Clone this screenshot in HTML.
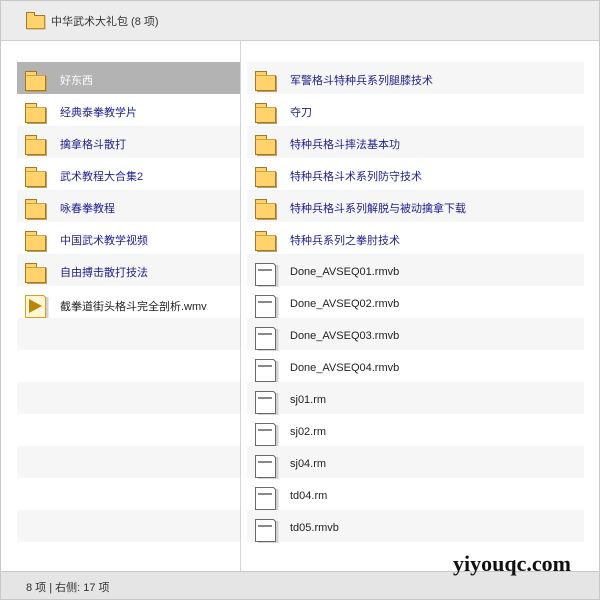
<!DOCTYPE html>
<html><head><meta charset="utf-8"><style>
*{margin:0;padding:0;box-sizing:border-box}
body{width:600px;height:600px;overflow:hidden;background:#fff;font-family:"Liberation Sans","Noto Sans CJK SC",sans-serif;font-size:11px;position:relative}
.frame{position:absolute;left:0;top:0;width:600px;height:600px;border:1px solid #c8c8c8}
.hdr{position:absolute;left:0;top:0;width:600px;height:41px;background:#ececec;border:1px solid #c8c8c8;border-bottom:1px solid #cfcfcf}
.hdr .t{position:absolute;left:50px;top:12px;color:#333;font-size:11px}
.div{position:absolute;left:240px;top:41px;width:1px;height:530px;background:#d4d4d4}
.ftr{position:absolute;left:0;top:571px;width:600px;height:29px;background:#e5e5e5;border:1px solid #c8c8c8}
.ftr span{position:absolute;left:25px;top:7px;color:#333;font-size:11px}
.row{position:absolute;height:32px}
.row.g{background:#f6f6f6}
.row.sel{background:#b3b3b3}
.row .n{position:absolute;top:10px;font-size:11px;white-space:nowrap}
.row .n.k{top:12px}
.L{left:17px;width:223px}
.R{left:247px;width:337px}
.L .n{left:43px}
.R .n{left:43px}
.f{color:#1f1f8f}
.k{color:#222}
.sel .n{color:#fff}
.ic{position:absolute;left:7px;top:8px}
.wm{position:absolute;left:453px;top:551px;font-family:"Liberation Serif",serif;font-weight:bold;font-size:22px;color:#111}
</style></head><body>
<div class="frame"></div>
<div class="hdr"><svg style="position:absolute;left:25px;top:11px" width="20" height="18"><path d="M0.5 0.5h8v3h10v13h-18z" fill="#ffd36b" stroke="#9c7a2a"/><path d="M19 4v13H1" fill="none" stroke="#c9a24a"/></svg><span class="t">中华武术大礼包 (8 项)</span></div>
<div class="div"></div>
<div id="c"></div>
<div class="ftr"><span>8 项 | 右侧: 17 项</span></div>
<div class="wm">yiyouqc.com</div>
<script>
var folder='<svg class="ic" width="24" height="22"><path d="M22 6v16H3" fill="none" stroke="#c2a060" stroke-width="2"/><path d="M1.5 1.5h11v4h9v15h-20z" fill="#ffd36b" stroke="#9c7a2a"/><path d="M1.5 5.5h20" stroke="#c9a24a"/></svg>';
var file='<svg class="ic" width="25" height="25"><path d="M23 3v21H4" fill="none" stroke="#d2d2d2" stroke-width="3"/><path d="M1.5 1.5h18l2 2v20h-20z" fill="#fff" stroke="#6a6a6a"/><path d="M4 8h14" stroke="#888" stroke-width="2"/></svg>';
var vid='<svg class="ic" width="25" height="25"><path d="M23 3v21H4" fill="none" stroke="#d2d2d2" stroke-width="3"/><path d="M1.5 1.5h18l2 2v20h-20z" fill="#fff6d8" stroke="#d4a020"/><path d="M5 5l13 7-13 7z" fill="#b8860b"/></svg>';
var L=[["好东西",1],["经典泰拳教学片",1],["擒拿格斗散打",1],["武术教程大合集2",1],["咏春拳教程",1],["中国武术教学视频",1],["自由搏击散打技法",1],["截拳道街头格斗完全剖析.wmv",2]];
var R=[["军警格斗特种兵系列腿膝技术",1],["夺刀",1],["特种兵格斗摔法基本功",1],["特种兵格斗术系列防守技术",1],["特种兵格斗系列解脱与被动擒拿下载",1],["特种兵系列之拳肘技术",1],["Done_AVSEQ01.rmvb",0],["Done_AVSEQ02.rmvb",0],["Done_AVSEQ03.rmvb",0],["Done_AVSEQ04.rmvb",0],["sj01.rm",0],["sj02.rm",0],["sj04.rm",0],["td04.rm",0],["td05.rmvb",0]];
var h='';
for(var i=0;i<15;i++){
 var cl='row L'+(i==0?' sel':(i%2==0?' g':''));
 h+='<div class="'+cl+'" style="top:'+(62+32*i)+'px">';
 if(L[i]){h+=(L[i][1]==1?folder:vid)+'<span class="n '+(L[i][1]==1?'f':'k')+'">'+L[i][0]+'</span>';}
 h+='</div>';
 var r=R[i];
 h+='<div class="row R'+(i%2==0?' g':'')+'" style="top:'+(62+32*i)+'px">'+(r[1]?folder:file)+'<span class="n '+(r[1]?'f':'k')+'">'+r[0]+'</span></div>';
}
document.getElementById('c').innerHTML=h;
</script>
</body></html>
